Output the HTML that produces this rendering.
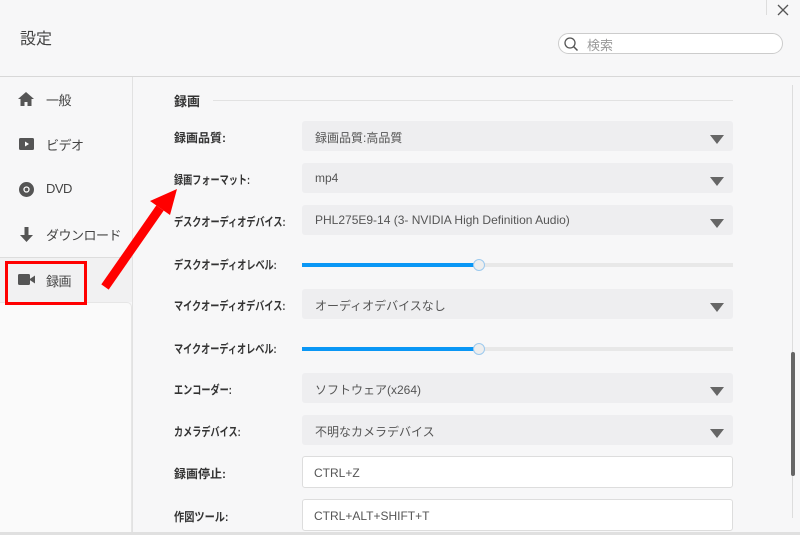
<!DOCTYPE html>
<html><head><meta charset="utf-8"><style>
*{margin:0;padding:0;box-sizing:border-box}
body{width:800px;height:535px;overflow:hidden;background:#f7f7f8;font-family:"Liberation Sans","Noto Sans CJK JP",sans-serif;position:relative;color:#333}
.a{position:absolute}
.lbl{position:absolute;left:174px;font-size:12px;font-weight:bold;color:#333;white-space:nowrap;transform-origin:0 50%}
.k{transform:scaleX(0.76)}
.dd{position:absolute;left:302px;width:431px;height:30px;background:#eeeef0;border-radius:3px;font-size:12px;color:#555;padding:8px 0 0 13px}
.dd:after{content:"";position:absolute;right:9px;top:14px;border-left:7px solid transparent;border-right:7px solid transparent;border-top:9px solid #666}
.in{position:absolute;left:302px;width:431px;height:32px;background:#fff;border:1px solid #ddd;border-radius:3px;font-size:12px;color:#555;padding:9px 0 0 11px}
.sl{position:absolute;left:302px;width:431px;height:4px;background:#e8e8e8}
.sl b{position:absolute;left:0;top:0;width:176px;height:4px;background:#0a97f5}
.sl i{position:absolute;left:171px;top:-4px;width:12px;height:12px;border-radius:50%;background:#eee;border:1px solid #9cc9ee}
.nav{position:absolute;left:46px;font-size:13px;color:#444;letter-spacing:-0.5px}
</style></head><body>
<div class="a" style="left:20px;top:25px;font-size:16px;color:#444">設定</div>
<div class="a" style="left:766px;top:0;width:1px;height:15px;background:#ddd"></div>
<svg class="a" style="left:777px;top:4px" width="12" height="12"><path d="M1 1L11 11M11 1L1 11" stroke="#555" stroke-width="1.3"/></svg>
<div class="a" style="left:558px;top:33px;width:225px;height:21px;border:1px solid #ccc;border-radius:11px;background:#fff"></div>
<svg class="a" style="left:563px;top:36px" width="16" height="16"><circle cx="7" cy="7" r="5" fill="none" stroke="#555" stroke-width="1.3"/><path d="M10.5 10.5L14.5 14.5" stroke="#555" stroke-width="1.5"/></svg>
<div class="a" style="left:587px;top:35px;font-size:13px;color:#999">検索</div>
<div class="a" style="left:0;top:76px;width:800px;height:1px;background:#d8d8d8"></div>
<div class="a" style="left:132px;top:77px;width:1px;height:458px;background:#e2e2e2"></div>
<div class="a" style="left:0;top:257px;width:132px;height:1px;background:#ddd"></div>
<div class="a" style="left:0;top:258px;width:132px;height:44px;background:#f1f1f2"></div>
<div class="a" style="left:0;top:302px;width:132px;height:233px;background:#fafafa;border-top:1px solid #e6e6e6;border-right:1px solid #e6e6e6;border-radius:0 5px 0 0"></div>
<svg class="a" style="left:18px;top:92px" width="16" height="14"><path d="M8 0L0 7H2.5V14H6.5V10H9.5V14H13.5V7H16Z" fill="#555"/></svg>
<div class="nav" style="top:90px">一般</div>
<svg class="a" style="left:19px;top:138px" width="15" height="12"><rect width="15" height="12" rx="1.5" fill="#555"/><path d="M6 3.5L10 6L6 8.5Z" fill="#fff"/></svg>
<div class="nav" style="top:135px">ビデオ</div>
<svg class="a" style="left:19px;top:182px" width="15" height="15"><circle cx="7.5" cy="7.5" r="7.5" fill="#555"/><circle cx="7.5" cy="7.5" r="2.5" fill="none" stroke="#fff" stroke-width="1.3"/></svg>
<div class="nav" style="top:181px">DVD</div>
<svg class="a" style="left:20px;top:227px" width="13" height="15"><path d="M4.5 0H8.5V8H13L6.5 15L0 8H4.5Z" fill="#555"/></svg>
<div class="nav" style="top:225px">ダウンロード</div>
<svg class="a" style="left:18px;top:274px" width="17" height="11"><rect width="12" height="11" rx="1.5" fill="#555"/><path d="M11 5.5L17 1.5V9.5Z" fill="#555"/></svg>
<div class="nav" style="top:271px">録画</div>
<div class="a" style="left:5px;top:261px;width:82px;height:44px;border:3px solid #f00"></div>
<div class="a" style="left:174px;top:91px;font-size:13px;font-weight:bold;color:#333">録画</div>
<div class="a" style="left:213px;top:100px;width:520px;height:1px;background:#e2e2e2"></div>
<div class="lbl" style="top:129px">録画品質:</div><div class="dd" style="top:121px">録画品質:高品質</div>
<div class="lbl k" style="top:171px">録画フォーマット:</div><div class="dd" style="top:163px">mp4</div>
<div class="lbl k" style="top:213px">デスクオーディオデバイス:</div><div class="dd" style="top:205px">PHL275E9-14 (3- NVIDIA High Definition Audio)</div>
<div class="lbl k" style="top:256px">デスクオーディオレベル:</div><div class="sl" style="top:263px"><b></b><i></i></div>
<div class="lbl k" style="top:297px">マイクオーディオデバイス:</div><div class="dd" style="top:289px">オーディオデバイスなし</div>
<div class="lbl k" style="top:340px">マイクオーディオレベル:</div><div class="sl" style="top:347px"><b></b><i></i></div>
<div class="lbl k" style="top:381px">エンコーダー:</div><div class="dd" style="top:373px">ソフトウェア(x264)</div>
<div class="lbl k" style="top:423px">カメラデバイス:</div><div class="dd" style="top:415px">不明なカメラデバイス</div>
<div class="lbl" style="top:465px">録画停止:</div><div class="in" style="top:456px">CTRL+Z</div>
<div class="lbl" style="top:508px;transform:scaleX(0.85)">作図ツール:</div><div class="in" style="top:499px">CTRL+ALT+SHIFT+T</div>
<div class="a" style="left:792px;top:85px;width:1px;height:433px;background:#ddd"></div>
<div class="a" style="left:791px;top:352px;width:4px;height:124px;background:#666;border-radius:2px"></div>
<div class="a" style="left:0;top:532px;width:800px;height:3px;background:#e0e0e0"></div>
<svg class="a" style="left:0;top:0" width="800" height="535"><path d="M105 287L160 208" stroke="#f00" stroke-width="9"/><path d="M177 189L150 201L170 215Z" fill="#f00"/></svg>
</body></html>
